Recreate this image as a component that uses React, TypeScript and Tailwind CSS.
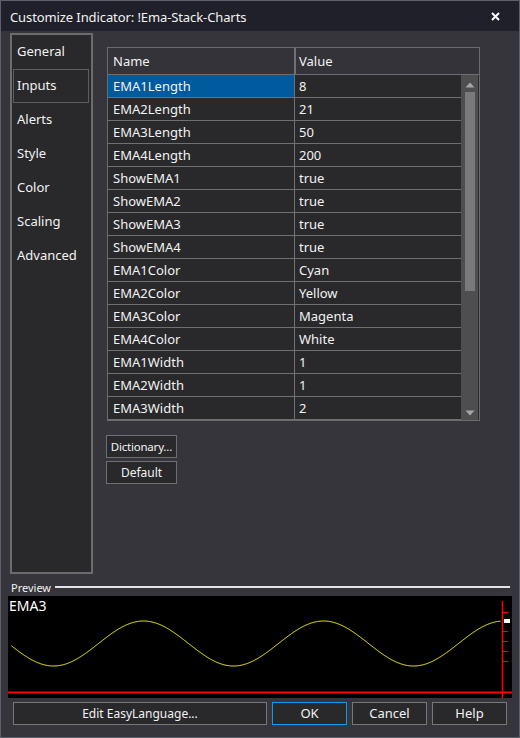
import React from "react";

const rows: [string, string][] = [
  ["EMA1Length", "8"],
  ["EMA2Length", "21"],
  ["EMA3Length", "50"],
  ["EMA4Length", "200"],
  ["ShowEMA1", "true"],
  ["ShowEMA2", "true"],
  ["ShowEMA3", "true"],
  ["ShowEMA4", "true"],
  ["EMA1Color", "Cyan"],
  ["EMA2Color", "Yellow"],
  ["EMA3Color", "Magenta"],
  ["EMA4Color", "White"],
  ["EMA1Width", "1"],
  ["EMA2Width", "1"],
  ["EMA3Width", "2"],
];

const tabs = ["General", "Inputs", "Alerts", "Style", "Color", "Scaling", "Advanced"];

function wavePath() {
  const pts: string[] = [];
  for (let x = 3; x <= 492; x++) {
    const y = 47.5 - 22.5 * Math.cos(((x - 135) / 180) * Math.PI * 2);
    pts.push(`${x === 3 ? "M" : "L"}${x + 0.5},${y.toFixed(2)}`);
  }
  return pts.join(" ");
}

function PreviewChart() {
  const ticks = [16, 35, 45, 55, 65];
  return (
    <div className="relative ml-[7px] mt-[2px] h-[102px] w-[504px] bg-black">
      <svg width="504" height="102" className="absolute left-0 top-0">
        <path d={wavePath()} fill="none" stroke="#ffff00" strokeWidth="1" />
        <line x1="0" y1="96.5" x2="504" y2="96.5" stroke="#ff0000" strokeWidth="2" />
        <line x1="494.5" y1="5" x2="494.5" y2="102" stroke="#ff0000" strokeWidth="1.5" />
        {ticks.map((t) => (
          <line key={t} x1="495" y1={t + 0.5} x2="500" y2={t + 0.5} stroke="#ff0000" strokeWidth="1" />
        ))}
        <rect x="496" y="23" width="6" height="4" fill="#ffffff" />
      </svg>
      <div className="absolute left-[1px] top-[1px] text-[14px] leading-[18px] text-white">EMA3</div>
    </div>
  );
}

export default function App() {
  return (
    <div
      className="flex h-[738px] w-[520px] flex-col border border-[#5d6069] bg-[#36353b] text-[13px] text-[#f2f2f2]"
      style={{ fontFamily: '"Noto Sans", "Open Sans", sans-serif' }}
    >
      {/* title bar */}
      <div className="flex h-[30px] shrink-0 items-center justify-between bg-[#1f2029] pl-[9px] pr-[19px]">
        <span className="pt-[2px] text-[13px] leading-none tracking-[-0.1px]">Customize Indicator: !Ema-Stack-Charts</span>
        <svg width="9" height="9" viewBox="0 0 9 9">
          <path d="M1 1 L8 8 M8 1 L1 8" stroke="#ffffff" strokeWidth="2" />
        </svg>
      </div>

      {/* main area */}
      <div className="flex h-[543px] shrink-0 pl-[9px] pt-[2px]">
        <div className="flex h-[541px] w-[83px] flex-col border-2 border-[#6c6c6e] bg-[#29292c]">
          {tabs.map((t) => (
            <div
              key={t}
              className={`mx-[1px] flex h-[34px] w-[76px] items-center border pl-[3px] ${
                t === "Inputs" ? "border-[#5e5e62]" : "border-transparent"
              }`}
            >
              {t}
            </div>
          ))}
        </div>

        <div className="ml-[14px] flex flex-col pt-[14px]">
          {/* inputs grid */}
          <div className="flex h-[374px] w-[373px] flex-col overflow-hidden border border-[#6b6b6d] bg-[#29292c]">
            <div className="flex h-[27px] shrink-0 border-b border-[#6f6f71] bg-[#343339]">
              <div className="flex w-[188px] items-center border-r-2 border-[#707072] pl-[5px] pt-[1px]">Name</div>
              <div className="flex items-center pl-[3px] pt-[1px]">Value</div>
            </div>
            <div className="flex min-h-0 flex-1">
              <div className="flex-1 overflow-hidden">
                {rows.map(([n, v], i) => (
                  <div key={n} className="flex h-[23px] border-b border-[#707072]">
                    <div
                      className={`flex w-[187px] items-center border-r border-[#707072] pl-[5px] pt-[1px] ${
                        i === 0 ? "bg-[#005a9e]" : ""
                      }`}
                    >
                      {n}
                    </div>
                    <div className="flex items-center pl-[4px] pt-[1px]">{v}</div>
                  </div>
                ))}
              </div>
              <div className="relative flex w-[17px] flex-col items-center bg-[#4e4e51]">
                <svg width="10" height="6" className="mt-[7px]">
                  <path d="M5 0.5 L9.5 5.5 L0.5 5.5 Z" fill="#a6a6a8" />
                </svg>
                <div className="mt-[4px] h-[199px] w-[10px] bg-[#7a7a7c]" />
                <div className="flex-1" />
                <svg width="10" height="6" className="mb-[4px]">
                  <path d="M0.5 0.5 L9.5 0.5 L5 5.5 Z" fill="#a6a6a8" />
                </svg>
              </div>
              <div className="w-[1px] bg-[#2c2c2f]" />
            </div>
          </div>

          <button className="ml-[-1px] mt-[14px] flex h-[23px] w-[71px] items-center justify-center whitespace-nowrap border border-[#6f6f71] bg-[#29292c] text-[11.5px] tracking-[-0.2px] text-[#f2f2f2]">
            Dictionary…
          </button>
          <button className="ml-[-1px] mt-[3px] flex h-[23px] w-[71px] items-center justify-center border border-[#6f6f71] bg-[#29292c] text-[12px] text-[#f2f2f2]">
            Default
          </button>
        </div>
      </div>

      {/* preview */}
      <div className="ml-[10px] mr-[9px] mt-[6px] flex h-[14px] items-center">
        <span className="text-[11px] leading-none text-[#f0f0f0]">Preview</span>
        <div className="ml-[4px] h-[2px] flex-1 bg-[#e4e4e4]" />
      </div>
      <PreviewChart />

      <div className="ml-[12px] mt-[4px] flex gap-[5px]">
        <button className="h-[23px] w-[254px] border border-[#77777a] bg-[#29292c] text-[12px] text-[#f2f2f2]">
          Edit EasyLanguage...
        </button>
        <button className="h-[23px] w-[75px] border border-[#0a9cf5] bg-[#29292c] text-[13px] text-[#f2f2f2]">
          OK
        </button>
        <button className="h-[23px] w-[75px] border border-[#77777a] bg-[#29292c] text-[13px] text-[#f2f2f2]">
          Cancel
        </button>
        <button className="h-[23px] w-[75px] border border-[#77777a] bg-[#29292c] text-[13px] text-[#f2f2f2]">
          Help
        </button>
      </div>
    </div>
  );
}
